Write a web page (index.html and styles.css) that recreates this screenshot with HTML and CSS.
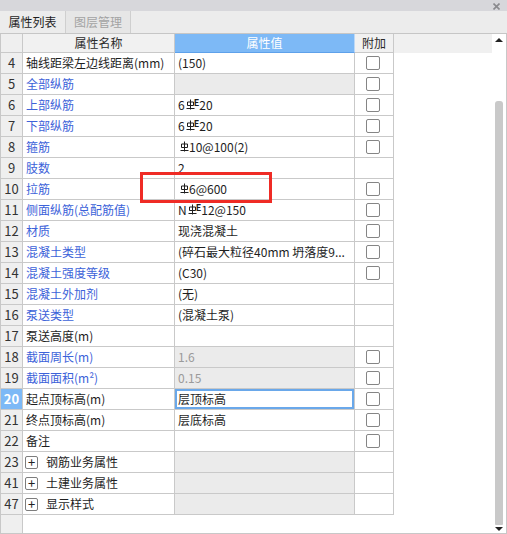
FILE: index.html
```html
<!DOCTYPE html>
<html lang="zh-CN">
<head>
<meta charset="utf-8">
<title>属性列表</title>
<link rel="stylesheet" href="styles.css">
</head>
<body>
<div class="panel">
  <div class="titlebar">
    <svg class="close" width="7" height="7" viewBox="0 0 7 7"><path d="M0.5 0.5 L6.5 6.5 M6.5 0.5 L0.5 6.5" stroke="#8a8a8e" stroke-width="1.6"/></svg>
  </div>
  <div class="tabs">
    <div class="tab active">属性列表</div>
    <div class="tab">图层管理</div>
  </div>
  <div class="body">
    <div class="gridwrap">
      <div class="grid">
        <div class="c num head corner"></div>
        <div class="c head name-h">属性名称</div>
        <div class="c head val-h">属性值</div>
        <div class="c head add-h">附加</div>

        <div class="c num">4</div><div class="c name">轴线距梁左边线距离(mm)</div><div class="c val">(150)</div><div class="c add"><span class="cb"></span></div>
        <div class="c num">5</div><div class="c name blue">全部纵筋</div><div class="c val grey"></div><div class="c add"><span class="cb"></span></div>
        <div class="c num">6</div><div class="c name blue">上部纵筋</div><div class="c val">6<svg class="rb" width="9" height="11" viewBox="0 0 9 11"><path d="M4.5 0.5 V10.5 M1.5 3 H7.5 V6.5 H1.5 Z M0.5 9.5 H8.5" fill="none" stroke="#1e1e1e" stroke-width="1"/></svg><sup class="e">E</sup>20</div><div class="c add"><span class="cb"></span></div>
        <div class="c num">7</div><div class="c name blue">下部纵筋</div><div class="c val">6<svg class="rb" width="9" height="11" viewBox="0 0 9 11"><path d="M4.5 0.5 V10.5 M1.5 3 H7.5 V6.5 H1.5 Z M0.5 9.5 H8.5" fill="none" stroke="#1e1e1e" stroke-width="1"/></svg><sup class="e">E</sup>20</div><div class="c add"><span class="cb"></span></div>
        <div class="c num">8</div><div class="c name blue">箍筋</div><div class="c val"><svg class="rb first" width="9" height="11" viewBox="0 0 9 11"><path d="M4.5 0.5 V10.5 M1.5 3 H7.5 V6.5 H1.5 Z M0.5 9.5 H8.5" fill="none" stroke="#1e1e1e" stroke-width="1"/></svg>10@100(2)</div><div class="c add"><span class="cb"></span></div>
        <div class="c num">9</div><div class="c name blue">肢数</div><div class="c val">2</div><div class="c add"></div>
        <div class="c num">10</div><div class="c name blue">拉筋</div><div class="c val"><svg class="rb first" width="9" height="11" viewBox="0 0 9 11"><path d="M4.5 0.5 V10.5 M1.5 3 H7.5 V6.5 H1.5 Z M0.5 9.5 H8.5" fill="none" stroke="#1e1e1e" stroke-width="1"/></svg>6@600</div><div class="c add"><span class="cb"></span></div>
        <div class="c num">11</div><div class="c name blue">侧面纵筋(总配筋值)</div><div class="c val">N<svg class="rb" width="9" height="11" viewBox="0 0 9 11"><path d="M4.5 0.5 V10.5 M1.5 3 H7.5 V6.5 H1.5 Z M0.5 9.5 H8.5" fill="none" stroke="#1e1e1e" stroke-width="1"/></svg><sup class="e">E</sup>12@150</div><div class="c add"><span class="cb"></span></div>
        <div class="c num">12</div><div class="c name blue">材质</div><div class="c val">现浇混凝土</div><div class="c add"><span class="cb"></span></div>
        <div class="c num">13</div><div class="c name blue">混凝土类型</div><div class="c val">(碎石最大粒径40mm 坍落度9...</div><div class="c add"><span class="cb"></span></div>
        <div class="c num">14</div><div class="c name blue">混凝土强度等级</div><div class="c val">(C30)</div><div class="c add"><span class="cb"></span></div>
        <div class="c num">15</div><div class="c name blue">混凝土外加剂</div><div class="c val">(无)</div><div class="c add"></div>
        <div class="c num">16</div><div class="c name blue">泵送类型</div><div class="c val">(混凝土泵)</div><div class="c add"></div>
        <div class="c num">17</div><div class="c name">泵送高度(m)</div><div class="c val"></div><div class="c add"></div>
        <div class="c num">18</div><div class="c name blue">截面周长(m)</div><div class="c val grey dim">1.6</div><div class="c add"><span class="cb"></span></div>
        <div class="c num">19</div><div class="c name blue">截面面积(m²)</div><div class="c val grey dim">0.15</div><div class="c add"><span class="cb"></span></div>
        <div class="c num sel">20</div><div class="c name">起点顶标高(m)</div><div class="c val focus">层顶标高</div><div class="c add"><span class="cb"></span></div>
        <div class="c num">21</div><div class="c name">终点顶标高(m)</div><div class="c val">层底标高</div><div class="c add"><span class="cb"></span></div>
        <div class="c num">22</div><div class="c name">备注</div><div class="c val"></div><div class="c add"><span class="cb"></span></div>
        <div class="c num">23</div><div class="c name group"><span class="plus">+</span>钢筋业务属性</div><div class="c val grey"></div><div class="c add"></div>
        <div class="c num">41</div><div class="c name group"><span class="plus">+</span>土建业务属性</div><div class="c val grey"></div><div class="c add"></div>
        <div class="c num">47</div><div class="c name group"><span class="plus">+</span>显示样式</div><div class="c val grey"></div><div class="c add"></div>
      </div>
      <div class="numcol-rest"></div>
      <div class="red-box"></div>
    </div>
    <div class="filler"><div class="filler-head"></div></div>
    <div class="scrollbar">
      <span class="arrow up"></span>
      <div class="track"><div class="thumb"></div></div>
      <span class="arrow down"></span>
    </div>
  </div>
</div>
</body>
</html>
```

FILE: styles.css
```css
* { box-sizing: border-box; }
html, body { margin: 0; padding: 0; background: #fff; }
body {
  width: 507px;
  height: 534px;
  overflow: hidden;
  font-family: "Noto Sans CJK SC", "Microsoft YaHei", sans-serif;
  font-size: 12px;
  color: #1e1e1e;
}
.panel { width: 507px; height: 534px; display: flex; flex-direction: column; }
.titlebar {
  height: 11px;
  background: #d7d7db;
  display: flex;
  justify-content: flex-end;
  align-items: center;
  padding-right: 7px;
}
.close { display: block; margin-top: 1px; }
.tabs {
  height: 23px;
  background: #ececec;
  border-bottom: 1px solid #c6c6c6;
  display: flex;
}
.tab {
  width: 65px;
  line-height: 22px;
  text-align: center;
  color: #a3a3a3;
  background: #e6e6e6;
  border-right: 1px solid #cfcfcf;
}
.tab.active { color: #1e1e1e; background: #ececec; width: 66px; }
.body {
  flex: 1;
  display: flex;
  border-left: 1px solid #c8c8c8;
  border-right: 1px solid #c8c8c8;
  border-bottom: 1px solid #c8c8c8;
  min-height: 0;
}
.gridwrap { position: relative; width: 393px; display: flex; flex-direction: column; }
.grid {
  display: grid;
  grid-template-columns: 22px 152px 180px 39px;
  grid-template-rows: 19px;
  grid-auto-rows: 21px;
}
.c {
  border-right: 1px solid #c9c9c9;
  border-bottom: 1px solid #c9c9c9;
  line-height: 20px;
  white-space: nowrap;
  overflow: hidden;
}
.head { line-height: 18px; text-align: center; background: #f1f1f1; color: #2a2a2a; }
.corner { background: #f8f8f8; }
.val-h { background: #7db9f6; color: #fff; border-bottom-color: #5ea1ea; border-right-color: #bcd8f6; }
.num { background: #efefef; text-align: center; color: #333; font-size: 13px; }
.num.sel { background: #7db9f6; color: #fff; font-weight: bold; }
.name { padding-left: 3px; }
.blue { color: #3c62d9; }
.val { padding-left: 3px; }
.grey { background: #ebebeb; }
.dim { color: #9a9a9a; }
.focus { box-shadow: inset 0 0 0 2px #6aa8ea; }
.add { display: flex; align-items: center; justify-content: center; }
.cb {
  width: 14px;
  height: 14px;
  border: 1px solid #858585;
  border-radius: 2px;
  background: #fff;
  margin-left: -2px;
}
.rb { vertical-align: 0px; margin: 0 0 0 1px; }
.rb.first { margin-left: 2px; }
.e { font-size: 9px; vertical-align: 4px; line-height: 0; margin-left: -1px; font-weight: bold; }
.group { display: flex; align-items: center; }
.plus {
  width: 13px;
  height: 13px;
  border: 1px solid #7d7d7d;
  border-radius: 2px;
  margin: 0 8px 0 -1px;
  font-size: 13px;
  line-height: 10px;
  text-align: center;
  color: #222;
}
.numcol-rest { flex: 1; width: 22px; background: #efefef; border-right: 1px solid #c9c9c9; }
.red-box {
  position: absolute;
  left: 139px;
  top: 138px;
  width: 132px;
  height: 31px;
  border: 3px solid #ef2b25;
}
.filler { width: 98px; display: flex; flex-direction: column; }
.filler-head { height: 19px; background: #f0f0f0; }
.scrollbar {
  width: 13px;
  display: flex;
  flex-direction: column;
  align-items: center;
  padding: 4px 0 2px;
}
.arrow { width: 0; height: 0; border-left: 4px solid transparent; border-right: 4px solid transparent; }
.arrow.up { border-bottom: 4px solid #222; }
.arrow.down { border-top: 4px solid #222; }
.track { flex: 1; width: 8px; padding: 59px 0 2px; display: flex; }
.thumb { flex: 1; background: #c9c9c9; border-radius: 3px 3px 1px 1px; }
```
